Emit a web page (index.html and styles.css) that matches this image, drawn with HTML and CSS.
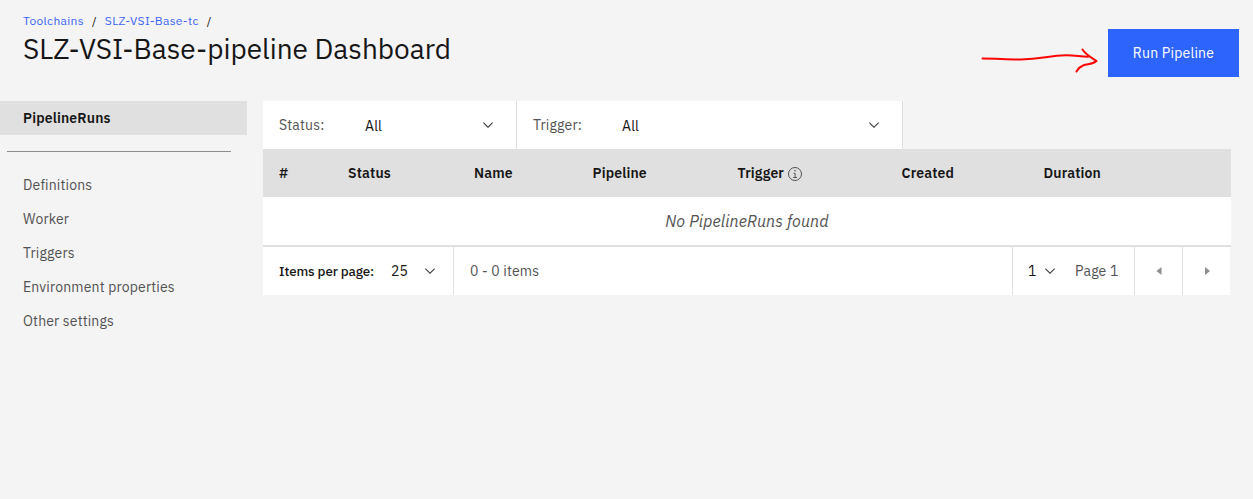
FILE: index.html
```html
<!DOCTYPE html>
<html lang="en">
<head>
<meta charset="utf-8">
<title>SLZ-VSI-Base-pipeline Dashboard</title>
<link rel="stylesheet" href="styles.css">
</head>
<body>
<header class="page-header">
  <div class="heading">
    <nav class="breadcrumb"><a class="crumb-root">Toolchains</a><span>/</span><a class="crumb-tc">SLZ-VSI-Base-tc</a><span>/</span></nav>
    <h1>SLZ-VSI-Base-pipeline Dashboard</h1>
  </div>
  <button class="run-button">Run Pipeline</button>
  <svg class="hint-arrow" width="120" height="28" viewBox="0 0 120 28"><path d="M2.500 11.500C16 11.500 28 12.500 41 12.400C62 12.400 68 8.500 86 8.300C94 8.200 99 9.300 108 9.700M102.500 2.500C106 8 111 10 116.500 14C112 18 107 16.500 103 18.500C99 20 98 22 96.500 24.500"/></svg>
</header>
<div class="layout">
  <aside class="sidebar">
    <a class="nav-item active">PipelineRuns</a>
    <hr>
    <a class="nav-item">Definitions</a>
    <a class="nav-item">Worker</a>
    <a class="nav-item">Triggers</a>
    <a class="nav-item">Environment properties</a>
    <a class="nav-item">Other settings</a>
  </aside>
  <main class="content">
    <div class="filters">
      <div class="filter status-filter"><label>Status:</label><span class="value">All</span><svg class="chevron" viewBox="0 0 16 16"><path d="M8 11 3 6l.7-.7L8 9.600l4.300-4.300.7.7z"/></svg></div>
      <div class="filter trigger-filter"><label>Trigger:</label><span class="value">All</span><svg class="chevron" viewBox="0 0 16 16"><path d="M8 11 3 6l.7-.7L8 9.600l4.300-4.300.7.7z"/></svg></div>
    </div>
    <div class="table-head">
      <span>#</span><span>Status</span><span>Name</span><span>Pipeline</span>
      <span class="with-icon">Trigger<svg class="info" viewBox="0 0 16 16"><circle cx="8" cy="8" r="6.500"/><path d="M6.500 7.300H8.100V11.400M6.200 11.500H10"/><circle class="dot" cx="8" cy="4.700" r=".8"/></svg></span>
      <span>Created</span><span>Duration</span>
    </div>
    <div class="empty">No PipelineRuns found</div>
    <div class="pagination">
      <div class="page-size"><span class="size-label">Items per page:</span><span class="size">25</span><svg class="chevron" viewBox="0 0 16 16"><path d="M8 11 3 6l.7-.7L8 9.600l4.300-4.300.7.7z"/></svg></div>
      <div class="range">0 - 0 items</div>
      <div class="page-select"><span class="num">1</span><svg class="chevron" viewBox="0 0 16 16"><path d="M8 11 3 6l.7-.7L8 9.600l4.300-4.300.7.7z"/></svg><span class="page-label">Page 1</span></div>
      <div class="step"><svg width="6" height="8" viewBox="0 0 6 8"><path d="M5.500 0v8L.5 4z"/></svg></div>
      <div class="step"><svg width="6" height="8" viewBox="0 0 6 8"><path d="M1 0v8l5-4z"/></svg></div>
    </div>
  </main>
</div>
</body>
</html>
```
FILE: styles.css
```css
* { box-sizing: border-box; }
body {
  margin: 0;
  min-height: 499px;
  background: #f4f4f4;
  color: #161616;
  font-family: "IBM Plex Sans", Roboto, sans-serif;
  font-size: 14px;
  line-height: 18px;
  letter-spacing: 0.16px;
}
.page-header {
  position: relative;
  display: flex;
  justify-content: space-between;
  height: 101px;
  padding: 13px 14px 0 23px;
}
.breadcrumb {
  display: flex;
  gap: 8px;
  font-size: 12px;
  line-height: 16px;
  letter-spacing: 0.32px;
}
.breadcrumb a { color: #3d64f5; }
h1 {
  margin: 2px 0 0;
  font-size: 28px;
  line-height: 36px;
  font-weight: 400;
  letter-spacing: 0;
  white-space: nowrap;
}
.run-button {
  width: 131px;
  height: 48px;
  margin-top: 16px;
  padding: 0;
  border: 0;
  background: #2d65fc;
  color: #fff;
  font: inherit;
  letter-spacing: 0.2px;
}
.hint-arrow {
  position: absolute;
  left: 980px;
  top: 47px;
  fill: none;
  stroke: #fb0505;
  stroke-width: 2;
  stroke-linecap: round;
  stroke-linejoin: round;
}
.layout { display: flex; gap: 16px; }
.sidebar { width: 247px; }
.nav-item {
  display: block;
  height: 34px;
  padding: 8px 23px;
  color: #525252;
}
.nav-item.active {
  background: #e0e0e0;
  color: #161616;
  font-weight: 600;
}
.sidebar hr {
  width: 224px;
  height: 1px;
  margin: 16px 0 16px 7px;
  border: 0;
  background: #8d8d8d;
}
.content { width: 968px; }
.filters { display: flex; }
.filter {
  display: flex;
  align-items: center;
  height: 48px;
  padding: 0 20px 0 16px;
  background: #fff;
  border-right: 1px solid #e0e0e0;
}
.filter label { color: #525252; }
.filter .value { padding-top: 2px; }
.status-filter { width: 254px; }
.status-filter label { width: 86px; }
.trigger-filter { width: 386px; }
.trigger-filter label { width: 89px; }
.chevron { width: 16px; height: 16px; fill: #393939; }
.filter .chevron { margin-left: auto; }
.table-head {
  display: grid;
  grid-template-columns: 69px 126px 118.5px 145px 164px 142px 1fr;
  align-items: center;
  height: 48px;
  padding-left: 16px;
  background: #e0e0e0;
  font-weight: 600;
}
.with-icon { display: flex; align-items: center; gap: 3px; }
.info {
  width: 16px;
  height: 16px;
  margin-top: 2px;
  fill: none;
  stroke: #525252;
}
.info .dot { fill: #525252; stroke: none; }
.empty {
  height: 50px;
  border-bottom: 2px solid #e0e0e0;
  background: #fff;
  color: #525252;
  font-size: 16px;
  font-style: italic;
  line-height: 48px;
  text-align: center;
}
.pagination {
  display: flex;
  width: 967px;
  height: 48px;
  background: #fff;
  line-height: 48px;
}
.page-size, .page-select, .step { display: flex; align-items: center; }
.page-size {
  width: 191px;
  padding-left: 16px;
  border-right: 1px solid #e0e0e0;
}
.size-label {
  width: 112px;
  font-size: 13.333px;
  font-weight: 500;
  letter-spacing: -0.1px;
  white-space: nowrap;
}
.size { width: 31px; }
.range { flex: 1; padding-left: 16px; color: #525252; }
.page-select {
  width: 122px;
  padding-left: 15px;
  border-left: 1px solid #e0e0e0;
}
.num { width: 14px; }
.page-label { margin-left: 17px; color: #525252; }
.step {
  width: 48px;
  justify-content: center;
  border-left: 1px solid #e0e0e0;
  fill: #8d8d8d;
}
```
